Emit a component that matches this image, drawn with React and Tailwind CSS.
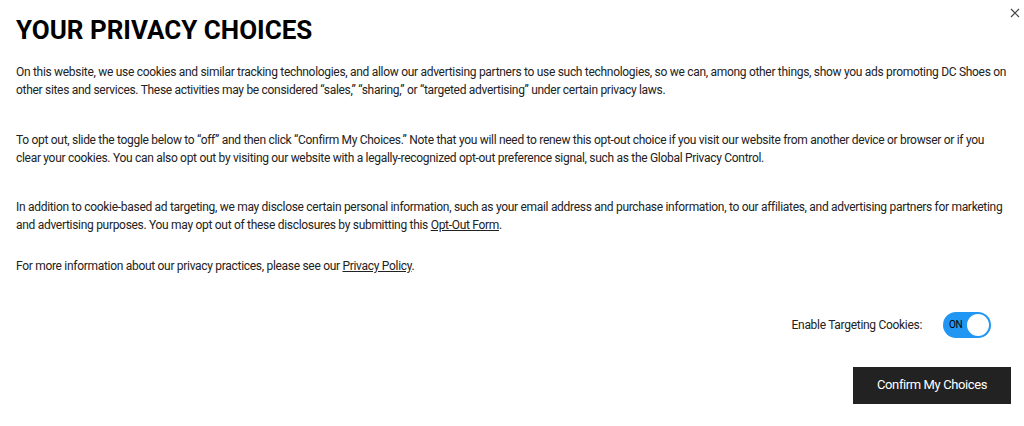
import React, { useState } from 'react';

export default function App() {
  const [on, setOn] = useState(true);

  return (
    <div className="relative w-[1024px] h-[426px] bg-white text-[#222] font-['Roboto',sans-serif] px-4 pt-[15px]">
      <button
        type="button"
        className="absolute right-[1px] top-[5px] w-4 h-4 flex items-center justify-center text-[#444]"
        aria-label="Close"
      >
        <svg width="10" height="10" viewBox="0 0 10 10" fill="none" stroke="currentColor" strokeWidth="1.2">
          <path d="M1 1l8 8M9 1l-8 8" />
        </svg>
      </button>

      <h1 className="text-[26px] leading-[30px] font-bold text-black">YOUR PRIVACY CHOICES</h1>

      <div className="text-[12px] leading-[17.5px] tracking-[-0.3px] mt-[19px]">
        <p>
          On this website, we use cookies and similar tracking technologies, and allow our advertising partners to use such technologies, so we can, among other things, show you ads promoting DC Shoes on other sites and services. These activities may be considered “sales,” “sharing,” or “targeted advertising” under certain privacy laws.
        </p>
        <p className="mt-[33px]">
          To opt out, slide the toggle below to “off” and then click “Confirm My Choices.” Note that you will need to renew this opt-out choice if you visit our website from another device or browser or if you clear your cookies. You can also opt out by visiting our website with a legally-recognized opt-out preference signal, such as the Global Privacy Control.
        </p>
        <p className="mt-[32px]">
          In addition to cookie-based ad targeting, we may disclose certain personal information, such as your email address and purchase information, to our affiliates, and advertising partners for marketing and advertising purposes. You may opt out of these disclosures by submitting this <a href="#" className="underline">Opt-Out Form</a>.
        </p>
        <p className="mt-[24px]">
          For more information about our privacy practices, please see our <a href="#" className="underline">Privacy Policy</a>.
        </p>
      </div>

      <div className="flex items-center justify-end gap-[21px] mt-[36px] pr-[17px]">
        <span className="text-[12px] tracking-[-0.3px]">Enable Targeting Cookies:</span>
        <button
          type="button"
          onClick={() => setOn(!on)}
          className={`w-[48px] h-[26px] rounded-full flex items-center px-[2px] ${on ? 'bg-[#2196f3] justify-between' : 'bg-[#bbb] justify-start'}`}
        >
          {on && <span className="text-[10px] text-black pl-[4px] tracking-[-0.3px]">ON</span>}
          <span className="w-[22px] h-[22px] rounded-full bg-white" />
        </button>
      </div>

      <div className="flex justify-end mt-[29px]">
        <button type="button" className="w-[158px] h-[37px] bg-[#222] text-white text-[13px] tracking-[-0.4px] mr-[-3px]">
          Confirm My Choices
        </button>
      </div>
    </div>
  );
}
